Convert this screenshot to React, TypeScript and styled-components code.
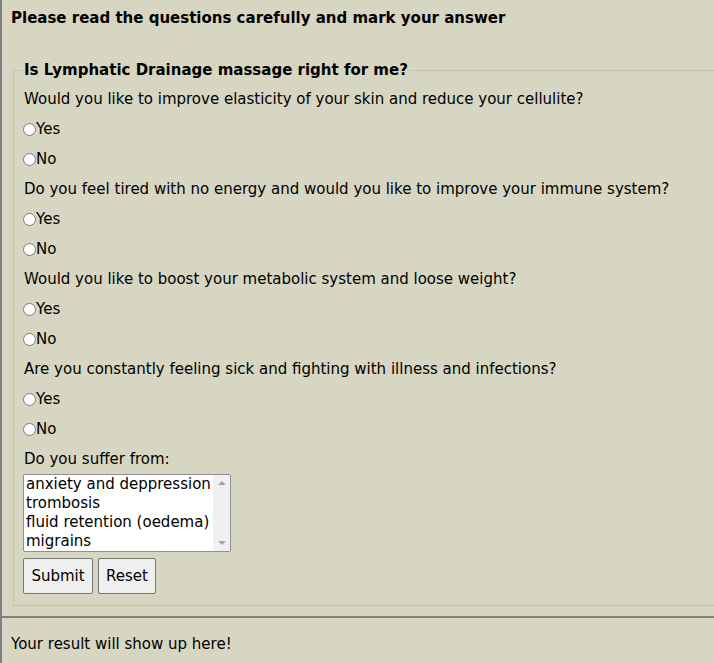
import React, { useState } from 'react';
import styled, { createGlobalStyle } from 'styled-components';

const GlobalStyle = createGlobalStyle`
  html, body {
    margin: 0;
    padding: 0;
    background-color: #d7d6c2;
  }

  body {
    font-family: Verdana, "DejaVu Sans", sans-serif;
    color: #000;
    overflow: hidden;
  }
`;

const Page = styled.div`
  border-left: 2px solid #808080;
  min-height: 100vh;
  box-sizing: border-box;
`;

const QuizSection = styled.section`
  border-bottom: 2px solid #808080;
  padding-bottom: 10px;
`;

const Title = styled.h1`
  margin: 0;
  padding: 8px 9px;
  font-size: 15px;
  line-height: 20px;
  font-weight: bold;
`;

const Fieldset = styled.fieldset`
  margin: 24px -20px 0 11px;
  padding: 0 10px 11px 10px;
  border: 1px solid #c2c2b8;
  min-width: 0;
`;

const Legend = styled.legend`
  padding: 0 1px;
  margin-left: -1px;
  font-size: 15px;
  font-weight: bold;
  line-height: 20px;
`;

const Question = styled.p`
  margin: 0;
  font-size: 15px;
  line-height: 30px;
`;

const FirstQuestion = styled(Question)`
  margin-top: 4px;
`;

const Option = styled.label`
  display: flex;
  align-items: center;
  font-size: 15px;
  line-height: 30px;
  height: 30px;
  margin-left: -1px;
`;

const Radio = styled.input`
  margin: 0;
  width: 13px;
  height: 13px;
`;

const ListBox = styled.div`
  display: flex;
  box-sizing: border-box;
  width: 208px;
  height: 78px;
  margin-left: -1px;
  background: #fff;
  border: 1px solid #8f8f8f;
  border-radius: 2px;
  overflow: hidden;
`;

const ListItems = styled.ul`
  flex: 1;
  margin: 0;
  padding: 0 0 0 2px;
  list-style: none;
`;

const ListItem = styled.li<{ $selected: boolean }>`
  font-size: 15px;
  line-height: 19px;
  height: 19px;
  white-space: nowrap;
  cursor: default;
  background: ${({ $selected }) => ($selected ? '#cecece' : 'transparent')};
`;

const ScrollTrack = styled.div`
  width: 17px;
  display: flex;
  flex-direction: column;
  justify-content: space-between;
  align-items: center;
  padding: 6px 0;
  background: #f0f0f0;
`;

const Arrow = styled.span<{ $down?: boolean }>`
  width: 0;
  height: 0;
  border-left: 4px solid transparent;
  border-right: 4px solid transparent;
  ${({ $down }) =>
    $down ? 'border-top: 4px solid #a3a3a3;' : 'border-bottom: 4px solid #a3a3a3;'}
`;

const ButtonRow = styled.div`
  display: flex;
  gap: 5px;
  margin-top: 6px;
  margin-left: -1px;
`;

const Button = styled.button<{ $width: number }>`
  width: ${({ $width }) => $width}px;
  height: 36px;
  padding: 0;
  font-family: Verdana, "DejaVu Sans", sans-serif;
  font-size: 15px;
  color: #000;
  background: #efefef;
  border: 1px solid #767676;
  border-radius: 2px;
`;

const Result = styled.p`
  margin: 0;
  padding: 16px 9px;
  font-size: 15px;
  line-height: 20px;
`;

const questions = [
  { id: 'q1', text: 'Would you like to improve elasticity of your skin and reduce your cellulite?' },
  { id: 'q2', text: 'Do you feel tired with no energy and would you like to improve your immune system?' },
  { id: 'q3', text: 'Would you like to boost your metabolic system and loose weight?' },
  { id: 'q4', text: 'Are you constantly feeling sick and fighting with illness and infections?' },
];

const ailments = ['anxiety and deppression', 'trombosis', 'fluid retention (oedema)', 'migrains'];

const App: React.FC = () => {
  const [picked, setPicked] = useState<string[]>([]);

  const toggle = (a: string) =>
    setPicked((p) => (p.includes(a) ? p.filter((x) => x !== a) : [...p, a]));

  return (
    <Page>
      <GlobalStyle />
      <QuizSection>
        <Title>Please read the questions carefully and mark your answer</Title>
        <form onSubmit={(e) => e.preventDefault()} onReset={() => setPicked([])}>
          <Fieldset>
            <Legend>Is Lymphatic Drainage massage right for me?</Legend>
            {questions.map((q, i) => {
              const Q = i === 0 ? FirstQuestion : Question;
              return (
                <React.Fragment key={q.id}>
                  <Q>{q.text}</Q>
                  <Option>
                    <Radio type="radio" name={q.id} value="yes" />
                    Yes
                  </Option>
                  <Option>
                    <Radio type="radio" name={q.id} value="no" />
                    No
                  </Option>
                </React.Fragment>
              );
            })}
            <Question>Do you suffer from:</Question>
            <ListBox role="listbox" aria-multiselectable="true">
              <ListItems>
                {ailments.map((a) => (
                  <ListItem
                    key={a}
                    role="option"
                    aria-selected={picked.includes(a)}
                    $selected={picked.includes(a)}
                    onClick={() => toggle(a)}
                  >
                    {a}
                  </ListItem>
                ))}
              </ListItems>
              <ScrollTrack>
                <Arrow />
                <Arrow $down />
              </ScrollTrack>
            </ListBox>
            <ButtonRow>
              <Button type="submit" $width={70}>Submit</Button>
              <Button type="reset" $width={58}>Reset</Button>
            </ButtonRow>
          </Fieldset>
        </form>
      </QuizSection>
      <Result>Your result will show up here!</Result>
    </Page>
  );
};

export default App;
